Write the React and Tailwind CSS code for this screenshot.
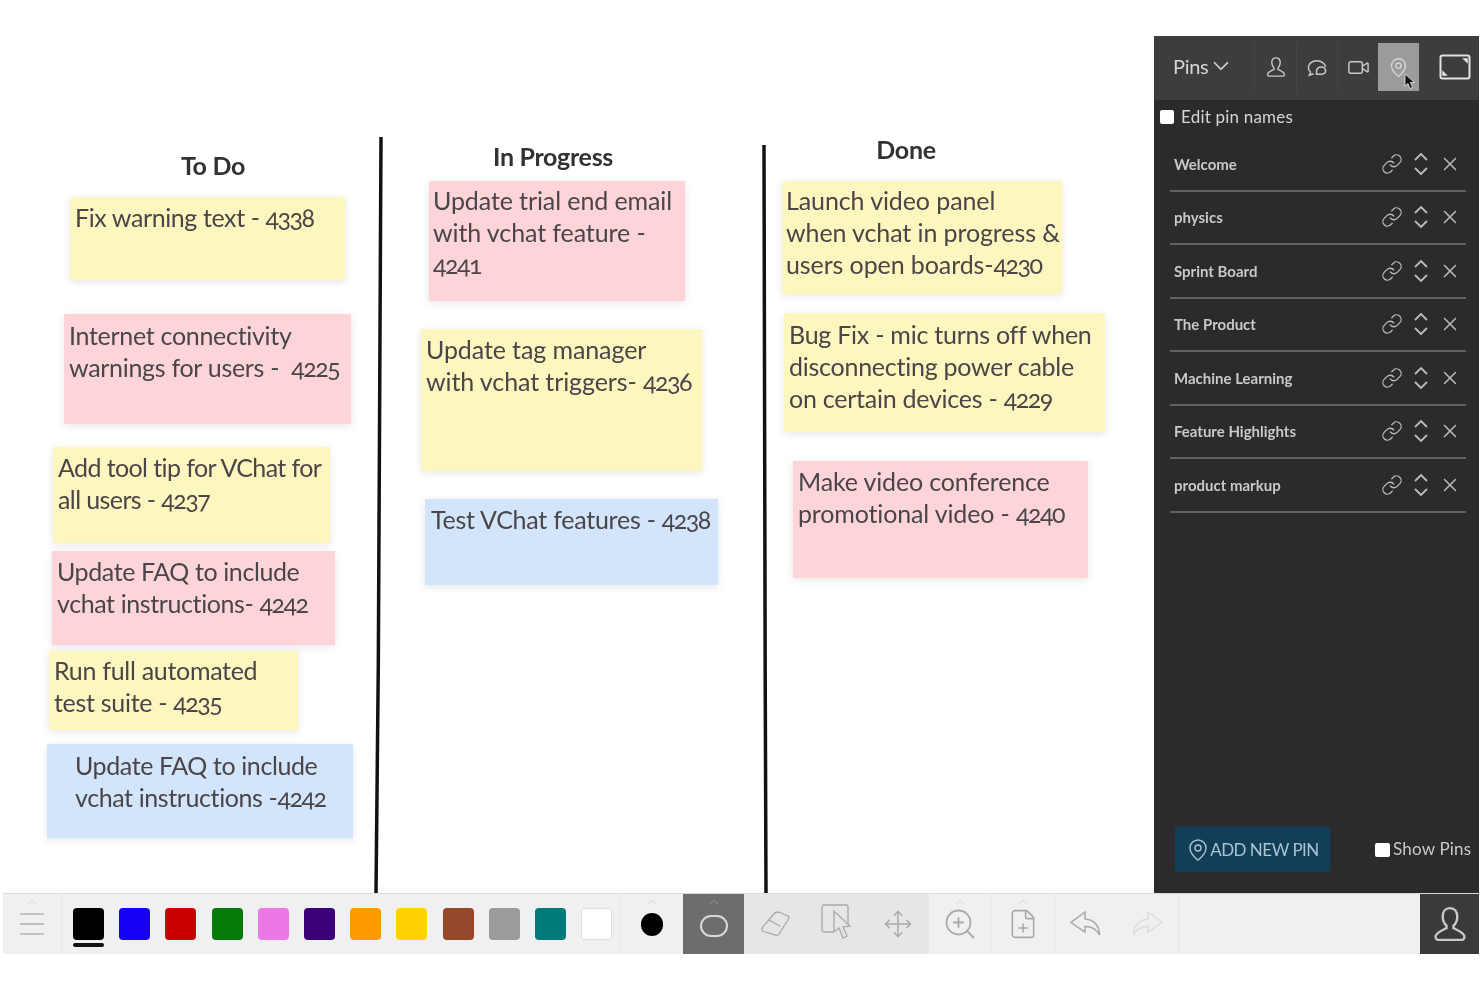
import React from 'react';
import { ChevronDown, ChevronUp, Link, Menu, MapPin, Move, Video, X, ZoomIn, FilePlus } from 'lucide-react';

const notes = [
    { cls: 'left-[70px] top-[197px] w-[275px] h-[83px] bg-[#fdf6bf] pl-[5px] pt-[4px] tracking-[-0.4px]', lines: ['Fix warning text - 4338'] },
    { cls: 'left-[64px] top-[314px] w-[287px] h-[110px] bg-[#fdd5d9] pl-[5px] pt-[5px] tracking-[-0.3px]', lines: ['Internet connectivity', 'warnings for users -  4225'] },
    { cls: 'left-[53px] top-[447px] w-[277px] h-[96px] bg-[#fdf6bf] pl-[5px] pt-[4px] tracking-[-0.6px]', lines: ['Add tool tip for VChat for', 'all users - 4237'] },
    { cls: 'left-[52px] top-[551px] w-[283px] h-[94px] bg-[#fdd5d9] pl-[5px] pt-[4px] tracking-[-0.4px]', lines: ['Update FAQ to include', 'vchat instructions- 4242'] },
    { cls: 'left-[49px] top-[651px] w-[249px] h-[79px] bg-[#fdf6bf] pl-[5px] pt-[3px] tracking-[-0.3px]', lines: ['Run full automated', 'test suite - 4235'] },
    { cls: 'left-[47px] top-[744px] w-[306px] h-[94px] bg-[#d3e5fb] pl-[28px] pt-[5px] tracking-[-0.4px]', lines: ['Update FAQ to include', 'vchat instructions -4242'] },
    { cls: 'left-[429px] top-[181px] w-[256px] h-[120px] bg-[#fdd5d9] pl-[4px] pt-[3px] tracking-[-0.1px]', lines: ['Update trial end email', 'with vchat feature -', '4241'] },
    { cls: 'left-[421px] top-[329px] w-[281px] h-[142px] bg-[#fdf6bf] pl-[5px] pt-[4px] tracking-[-0.1px]', lines: ['Update tag manager', 'with vchat triggers- 4236'] },
    { cls: 'left-[425px] top-[499px] w-[293px] h-[86px] bg-[#d3e5fb] pl-[6px] pt-[4px] tracking-[-0.25px]', lines: ['Test VChat features - 4238'] },
    { cls: 'left-[782px] top-[181px] w-[280px] h-[113px] bg-[#fdf6bf] pl-[4px] pt-[3px] tracking-[-0.1px]', lines: ['Launch video panel', 'when vchat in progress &', 'users open boards-4230'] },
    { cls: 'left-[784px] top-[313px] w-[321px] h-[119px] bg-[#fdf6bf] pl-[5px] pt-[5px] tracking-[-0.25px]', lines: ['Bug Fix - mic turns off when', 'disconnecting power cable', 'on certain devices - 4229'] },
    { cls: 'left-[793px] top-[461px] w-[295px] h-[117px] bg-[#fdd5d9] pl-[5px] pt-[4px] tracking-[-0.15px]', lines: ['Make video conference', 'promotional video - 4240'] },
];

const pins = ['Welcome', 'physics', 'Sprint Board', 'The Product', 'Machine Learning', 'Feature Highlights', 'product markup'];

const swatches = [
    'bg-[#000000]', 'bg-[#1400f5]', 'bg-[#c90000]', 'bg-[#067a06]', 'bg-[#ec78e6]', 'bg-[#3c0078]',
    'bg-[#ff9a00]', 'bg-[#ffd200]', 'bg-[#96492a]', 'bg-[#9c9a9c]', 'bg-[#007a78]', 'bg-white border border-[#dddddd]',
];

const Caret = ({ className = 'text-[#c9c8cb]' }) => (
    <ChevronUp size={14} strokeWidth={1.2} className={`absolute top-[1px] left-1/2 -translate-x-1/2 ${className}`} />
);

// ticket numbers are narrower than the rest of the text
const NoteLine = ({ text }) => {
    const parts = text.split(/(\d{4})/);
    return (
        <div>
            {parts.map((part, i) => (
                i % 2 === 1
                    ? <span key={part} className="oldstyle-nums tracking-[-1.5px]">{part}</span>
                    : <span key={i}>{part}</span>
            ))}
        </div>
    );
};

const PersonIcon = ({ size = 22, className = '' }) => (
    <svg width={size} height={size} viewBox="0 0 24 24" fill="none" stroke="currentColor" strokeWidth="1.5" className={className}>
        <path d="M12 2c-3 0-4.6 2.4-4.6 5.2 0 2.4 1 4.6 2.4 5.8v1.6c-2.4 1.2-6 2.6-6.8 4.8-.3 1 .1 2.6 1.4 2.6h15.2c1.3 0 1.7-1.6 1.4-2.6-.8-2.2-4.4-3.6-6.8-4.8V13c1.4-1.2 2.4-3.4 2.4-5.8C16.6 4.4 15 2 12 2z" />
    </svg>
);

const ChatIcon = () => (
    <svg width="23" height="23" viewBox="0 0 24 24" fill="none" stroke="currentColor" strokeWidth="1.6">
        <path d="M5 17c-1.5-1.2-2.500-3-2.500-5C2.500 8 6.500 5 11.500 5c4.500 0 8.500 2.600 9 6.500" />
        <path d="M5 17l-1.500 3 4.500-1.500" />
        <path d="M11 15.500c0-2.200 2-4 4.800-4s4.700 1.800 4.700 4-2 3.500-4.700 3.500h-4.800z" />
    </svg>
);

const ExpandIcon = () => (
    <svg width="32" height="26" viewBox="0 0 32 26" fill="none">
        <rect x="1.500" y="1.500" width="29" height="23" rx="2" stroke="currentColor" strokeWidth="2" />
        <path d="M25 5h3v3zM7 21H4v-3z" fill="currentColor" stroke="currentColor" strokeWidth="1.500" />
    </svg>
);

const UpDownIcon = () => (
    <svg width="16" height="26" viewBox="0 0 16 26" fill="none" stroke="currentColor" strokeWidth="1.800">
        <path d="M2 9l6-6 6 6M2 17l6 6 6-6" />
    </svg>
);

const EraserIcon = () => (
    <svg width="34" height="30" viewBox="0 0 34 30" fill="none" stroke="currentColor" strokeWidth="1.300">
        <path d="M22 3.500l8 3.500c1 .5 1.300 1.500.8 2.500L21 25c-.8 1.200-2 1.700-3.300 1.200l-12-3.700c-1.700-.6-2.300-2.300-1.400-3.800L15 6c1.600-2.300 4.500-3.500 7-2.500z" />
        <path d="M11 11l11.500 6.500" />
    </svg>
);

const SelectIcon = () => (
    <svg width="34" height="42" viewBox="0 0 34 42" fill="none" stroke="currentColor" strokeWidth="1.300">
        <path d="M13 29H4a2 2 0 0 1-2-2V4a2 2 0 0 1 2-2h22a2 2 0 0 1 2 2v17" />
        <path d="M14 8l0 21 5-4 4 10 4-2-4-9 7-1z" fill="#e6e5e7" />
    </svg>
);

const BackArrow = ({ flip = false, className = '' }) => (
    <svg width="34" height="30" viewBox="0 0 34 30" fill="none" stroke="currentColor" strokeWidth="1.500" className={`${flip ? '-scale-x-100' : ''} ${className}`}>
        <path d="M16 3L2 13.500 16 23v-5.500c6.500 0 11.500 2.500 14.500 8.500 0-9-5.500-15.500-14.500-16z" />
    </svg>
);

const ColumnLine = ({ className, d }) => (
    <svg className={`absolute ${className}`} viewBox="0 0 10 760" preserveAspectRatio="none" fill="none">
        <path d={d} stroke="#111111" strokeWidth="3.500" vectorEffect="non-scaling-stroke" />
    </svg>
);

const Heading = ({ className, children }) => (
    <h2 className={`absolute -translate-x-1/2 text-[25px] leading-[30px] font-bold text-[#333135] tracking-[-0.3px] whitespace-nowrap ${className}`}>
        {children}
    </h2>
);

const App = () => {
    return (
        <div className="w-[1480px] h-[987px] bg-white flex flex-col font-['Lato',sans-serif] overflow-hidden blur-[0.5px]">
            <div className="flex h-[893px] shrink-0 pl-[3px]">
                <main className="relative flex-1 -ml-[3px]">
                    <Heading className="left-[213px] top-[150px]">To Do</Heading>
                    <Heading className="left-[553px] top-[141px]">In Progress</Heading>
                    <Heading className="left-[906px] top-[134px]">Done</Heading>

                    <ColumnLine className="left-[373px] top-[137px] w-[10px] h-[756px]" d="M8 0 C 8 200, 6 500, 3 760" />
                    <ColumnLine className="left-[760px] top-[145px] w-[10px] h-[748px]" d="M4 0 C 4 200, 5 500, 6 760" />

                    {notes.map((note) => (
                        <div key={note.lines[0]} className={`absolute shadow-[0_2px_8px_rgba(0,0,0,0.1)] text-[25px] leading-[32px] text-[#4a4548] whitespace-pre ${note.cls}`}>
                            {note.lines.map((line) => (
                                <NoteLine key={line} text={line} />
                            ))}
                        </div>
                    ))}
                </main>

                <aside className="w-[325px] mt-[36px] mr-px bg-[#2b2a2c] flex flex-col text-[#d5d4d6]">
                    <div className="h-[64px] bg-[#3d3c3e] flex items-center shrink-0">
                        <div className="w-[100px] pl-[19px] flex items-center text-[20px] tracking-[-0.3px] -mt-[5px]">
                            Pins
                            <ChevronDown size={26} strokeWidth={1.6} />
                        </div>
                        <div className="flex items-center h-[50px] -mt-[2px] text-[#c9c8ca]">
                            <div className="w-[42px] h-full flex items-center justify-center border-l border-[#464547]"><PersonIcon /></div>
                            <div className="w-[41px] h-full flex items-center justify-center border-l border-[#464547]"><ChatIcon /></div>
                            <div className="w-[41px] h-full flex items-center justify-center border-l border-[#464547]"><Video size={23} strokeWidth={1.5} /></div>
                            <div className="relative w-[41px] h-[48px] flex items-center justify-center bg-[#9b9a9c] text-[#d8d7d9]">
                                <MapPin size={21} strokeWidth={1.5} />
                                <svg className="absolute right-[2px] bottom-[1px]" width="14" height="17" viewBox="0 0 14 17">
                                    <path d="M2 1l0 12 3-2.500 2 5 2.500-1-2-5h4z" fill="#111111" stroke="#eeeeee" strokeWidth="0.800" />
                                </svg>
                            </div>
                        </div>
                        <div className="ml-[20px] -mt-[2px] text-[#e2e1e3]"><ExpandIcon /></div>
                    </div>

                    <label className="h-[34px] mb-[4px] flex items-center pl-[6px] gap-[7px] text-[17px] tracking-[0.2px] shrink-0">
                        <span className="w-[14px] h-[14px] bg-white rounded-[2px]" />
                        Edit pin names
                    </label>

                    <div className="pl-[16px] pr-[13px] flex-1">
                        {pins.map((pin) => (
                            <div key={pin} className="h-[53.500px] flex items-center border-b-[2px] border-[#626163] pr-[5px]">
                                <span className="flex-1 pl-[4px] text-[15px] font-bold text-[#c9c8ca]">{pin}</span>
                                <div className="flex items-center gap-[10px] text-[#bcbbbd]">
                                    <Link size={22} strokeWidth={1.4} />
                                    <UpDownIcon />
                                    <X size={22} strokeWidth={1.6} />
                                </div>
                            </div>
                        ))}
                    </div>

                    <div className="h-[66px] flex items-start pl-[21px] shrink-0">
                        <button className="w-[155px] h-[45px] bg-[#123f57] rounded-[2px] flex items-center justify-center text-[#a9c3d2] text-[17px] tracking-[-0.5px]">
                            <MapPin size={24} strokeWidth={1.4} />
                            ADD NEW PIN
                        </button>
                        <label className="ml-[45px] mt-[9px] flex items-center gap-[3px] text-[17px] tracking-[0.2px] text-[#c9c8ca]">
                            <span className="w-[15px] h-[14px] bg-white rounded-[2px] mt-[3px]" />
                            Show Pins
                        </label>
                    </div>
                </aside>
            </div>

            <footer className="ml-[3px] mr-px h-[61px] bg-[#f0eff1] border-t border-[#dadadb] flex items-stretch shrink-0 text-[#b5b4b7]">
                <div className="relative w-[59px] flex items-center justify-center border-r border-[#e8e7e9]">
                    <Caret />
                    <Menu size={34} strokeWidth={1.300} className="text-[#bdbcbf]" />
                </div>
                <div className="flex items-center w-[558px] pl-[11px] gap-[15.200px] border-r border-[#e8e7e9]">
                    {swatches.map((swatch, i) => (
                        <div key={swatch} className="relative">
                            <div className={`w-[31px] h-[32px] rounded-[4px] ${swatch}`} />
                            {i === 0 && <div className="absolute left-0 top-[35px] w-[31px] h-[4px] rounded-sm bg-[#111111]" />}
                        </div>
                    ))}
                </div>
                <div className="relative w-[63px] flex items-center justify-center">
                    <Caret />
                    <div className="w-[22px] h-[23px] mt-[1px] rounded-full bg-black" />
                </div>
                <div className="relative w-[61px] bg-[#6d6c6e] flex items-center justify-center text-[#d8d7d9]">
                    <Caret className="text-[#a9a8aa]" />
                    <div className="w-[28px] h-[22px] mt-[3px] rounded-full border-2 border-[#d8d7d9]" />
                </div>
                <div className="w-[185px] bg-[#e6e5e7] flex items-center text-[#a9a8ab]">
                    <div className="w-[62px] flex justify-center"><EraserIcon /></div>
                    <div className="w-[61px] flex justify-center"><SelectIcon /></div>
                    <div className="w-[62px] flex justify-center"><Move size={30} strokeWidth={1.200} /></div>
                </div>
                <div className="relative w-[62px] flex items-center justify-center border-r border-[#e6e5e7] text-[#a9a8ab]">
                    <Caret />
                    <ZoomIn size={36} strokeWidth={1.200} />
                </div>
                <div className="relative w-[64px] flex items-center justify-center border-r border-[#e6e5e7] text-[#a9a8ab]">
                    <Caret />
                    <FilePlus size={32} strokeWidth={1.200} />
                </div>
                <div className="w-[124px] flex items-center border-r border-[#e6e5e7]">
                    <div className="w-[62px] flex justify-center text-[#a9a8ab]"><BackArrow /></div>
                    <div className="w-[62px] flex justify-center text-[#dddcde]"><BackArrow flip /></div>
                </div>
                <div className="flex-1" />
                <div className="w-[59px] bg-[#3a393b] flex items-center justify-center text-[#c9c8ca]">
                    <PersonIcon size={38} />
                </div>
            </footer>
        </div>
    );
};

export default App;
